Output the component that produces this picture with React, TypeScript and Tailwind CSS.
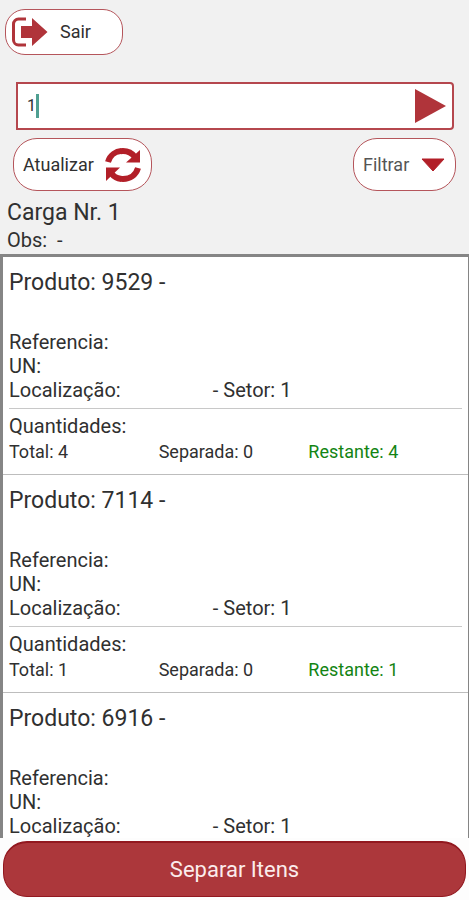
import * as React from 'react'

type Produto = {
  codigo: string
  setor: number
  total: number
  separada: number
}

const PRODUTOS: Produto[] = [
  { codigo: '9529', setor: 1, total: 4, separada: 0 },
  { codigo: '7114', setor: 1, total: 1, separada: 0 },
  { codigo: '6916', setor: 1, total: 1, separada: 0 },
]

export default function App() {
  const [busca, setBusca] = React.useState('1')

  return (
    <div className="flex h-screen flex-col bg-[#fdfdfd] font-['Roboto',sans-serif] text-[#303030]">
      <header className="bg-[#f1f1f1] pt-[9px]">
        <button
          type="button"
          className="ml-[5px] flex h-[46px] w-[118px] items-center gap-3 rounded-[20px] border border-[#b5555b] bg-white pl-[6px] text-lg"
        >
          <IconSair />
          Sair
        </button>

        <form
          onSubmit={(e) => e.preventDefault()}
          className="mt-[27px] mr-[15px] ml-4 flex h-12 items-stretch rounded-r-[4px] border-2 border-[#b5474e] bg-white"
        >
          <label className="flex min-w-0 flex-1 items-center pl-[9px]">
            <input
              aria-label="Buscar produto"
              value={busca}
              onChange={(e) => setBusca(e.target.value)}
              className="field-sizing-content max-w-full min-w-2 bg-transparent text-base outline-none"
            />
            <span className="h-6 w-[3px] bg-[#4f9f91]" />
          </label>
          <button type="submit" aria-label="Buscar" className="flex w-[38px] items-center">
            <IconPlay />
          </button>
        </form>

        <div className="mt-2 mr-[13px] ml-[13px] flex justify-between">
          <button
            type="button"
            className="flex h-[53px] w-[139px] items-center justify-between rounded-[24px] border border-[#b5555b] bg-white pr-[10px] pl-[9px] text-lg"
          >
            Atualizar
            <IconAtualizar />
          </button>
          <button
            type="button"
            className="flex h-[53px] w-[103px] items-center justify-between rounded-[24px] border border-[#b5555b] bg-white pr-[10px] pl-[9px] text-lg text-[#555]"
          >
            Filtrar
            <IconSeta />
          </button>
        </div>

        <div className="pt-2 pl-[7px]">
          <h1 className="text-[23px] leading-[28px]">Carga Nr. 1</h1>
          <p className="text-xl leading-[27px] whitespace-pre">Obs:  -</p>
        </div>
      </header>

      <ul className="min-h-0 flex-1 overflow-y-auto border-t-[3px] border-r border-l-[3px] border-[#858585] bg-white [scrollbar-width:none]">
        {PRODUTOS.map((p) => (
          <Item key={p.codigo} produto={p} />
        ))}
      </ul>

      <footer className="px-[3px] pt-[3px] pb-[3px]">
        <button
          type="button"
          className="h-14 w-full rounded-[24px] border border-t-2 border-[#92181f] bg-[#ac373b] text-[22px] text-[#fbecec]"
        >
          Separar Itens
        </button>
      </footer>
    </div>
  )
}

function Item({ produto }: { produto: Produto }) {
  const { codigo, setor, total, separada } = produto
  return (
    <li className="border-b border-[#bdbdbd] pt-3 pr-[6px] pb-[10px] pl-[6px]">
      <h2 className="text-[23px] leading-[28px]">Produto: {codigo} -</h2>
      <div className="mt-[33px] border-b border-[#c8c8c8] pb-[6px] text-xl leading-6">
        <p>Referencia:</p>
        <p>UN:</p>
        <p className="flex">
          <span className="w-[45%]">Localização:</span>
          <span>- Setor: {setor}</span>
        </p>
      </div>
      <p className="mt-[5px] text-xl leading-6">Quantidades:</p>
      <div className="mt-[2px] grid grid-cols-3 pr-1 text-lg leading-6">
        <span>Total: {total}</span>
        <span>Separada: {separada}</span>
        <span className="text-[#138413]">Restante: {total - separada}</span>
      </div>
    </li>
  )
}

function IconSair() {
  return (
    <svg width={36} height={30} viewBox="0 0 36 30" fill="none" className="shrink-0">
      <path d="M14 2H6.500a5 5 0 0 0-5 5v16a5 5 0 0 0 5 5H14" stroke="#b0343a" strokeWidth={3} />
      <path d="M9 9h11V1l15.500 14L20 29v-8H9z" fill="#b0343a" />
    </svg>
  )
}

function IconPlay() {
  return (
    <svg width={32} height={36} viewBox="0 0 32 36">
      <path d="M1 1v34l31-17z" fill="#b0343a" />
    </svg>
  )
}

function IconAtualizar() {
  return (
    <svg width={36} height={36} viewBox="0 0 36 36" fill="none">
      <path d="M3 15C5 8 11 4 18 4c5 0 9 2 12 6" stroke="#b21f28" strokeWidth={6} />
      <path d="M35 3v12.500H21z" fill="#b21f28" />
      <path d="M33 21c-2 7-8 11-15 11-5 0-9-2-12-6" stroke="#b21f28" strokeWidth={6} />
      <path d="M1 34V20.500h14z" fill="#b21f28" />
    </svg>
  )
}

function IconSeta() {
  return (
    <svg width={24} height={14} viewBox="0 0 24 14">
      <path d="M1 1h22L12 13z" fill="#b21f28" stroke="#b21f28" strokeLinejoin="round" />
    </svg>
  )
}
